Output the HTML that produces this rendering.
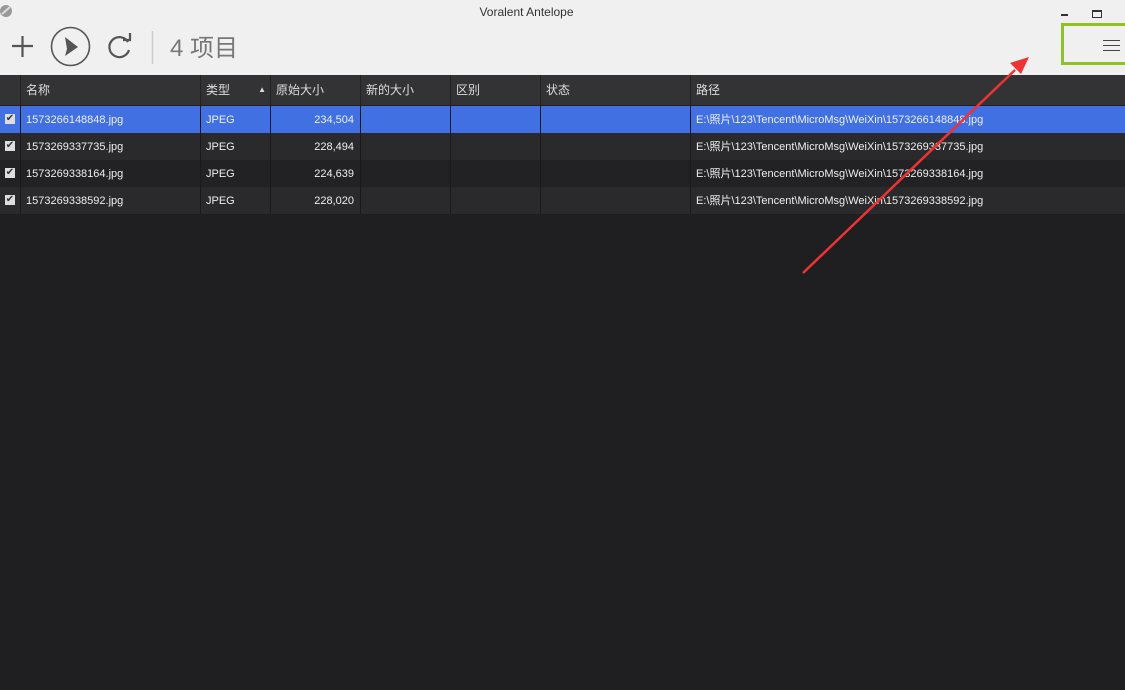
<!DOCTYPE html>
<html><head><meta charset="utf-8"><style>
body{margin:0;width:1125px;height:690px;background:#1f1f21;font-family:"Liberation Sans","Noto Sans CJK SC",sans-serif;position:relative;overflow:hidden}
.top{position:absolute;left:0;top:0;width:1125px;height:75px;background:#f0f0f0}
.title{position:absolute;top:5px;left:0;width:1053px;text-align:center;font-size:12px;color:#333}
.hdr{position:absolute;top:75px;left:0;width:1125px;height:30px;background:#333336;color:#ddd;font-size:12px}
.row{position:absolute;left:0;width:1125px;height:27px;color:#eee;font-size:11px}
.c{position:absolute;top:0;height:100%;line-height:29px;box-sizing:border-box;padding-left:5px;border-left:1px solid #1a1a1a;white-space:nowrap}
.hdr .c{line-height:30px;border-left:1px solid #222}
.chk{position:absolute;left:5px;top:8px;width:10px;height:10px;background:#ddd;font-size:10px;line-height:10px;color:#333;text-align:center}
</style></head><body>
<div class="top">
<svg width="14" height="14" style="position:absolute;left:0;top:4px"><circle cx="6" cy="7" r="6" fill="#999"/><path d="M2 10 L10 3" stroke="#ddd" stroke-width="2"/></svg>
<div class="title">Voralent Antelope</div>
<div style="position:absolute;left:1061px;top:14px;width:7px;height:2px;background:#333"></div>
<div style="position:absolute;left:1092px;top:10px;width:8px;height:5px;border:1px solid #333;border-top-width:2px"></div>
<svg width="160" height="50" style="position:absolute;left:0;top:22px">
<path d="M12 24H33M22.5 14V35" stroke="#555" stroke-width="2.2"/>
<circle cx="70.5" cy="24.5" r="19" fill="none" stroke="#555" stroke-width="1.6"/>
<path d="M65 15L78 25L65 34L67 27Z" fill="#555"/>
<path d="M128 20A10 10 0 1 0 129 28" fill="none" stroke="#555" stroke-width="2.2"/>
<path d="M123 18L130 18L130 11" fill="none" stroke="#555" stroke-width="2.2"/>
<path d="M152.5 9V42" stroke="#ccc" stroke-width="1.5"/>
</svg>
<div style="position:absolute;left:170px;top:28px;font-size:24px;color:#777">4 项目</div>
<div style="position:absolute;left:1061px;top:23px;width:70px;height:42px;border:3px solid #8fc31f;box-sizing:border-box"></div>
<div style="position:absolute;left:1103px;top:40px;width:17px;height:1px;background:#444;box-shadow:0 5px 0 #444,0 10px 0 #444"></div>
</div>
<div class="hdr">
<div class="c" style="left:20px">名称</div><div class="c" style="left:200px;width:70px">类型<span style="position:absolute;right:4px;font-size:8px">▲</span></div><div class="c" style="left:270px">原始大小</div><div class="c" style="left:360px">新的大小</div><div class="c" style="left:450px">区别</div><div class="c" style="left:540px">状态</div><div class="c" style="left:690px">路径</div>
</div>
<div class="row" style="top:106px;background:#4170e3"><div class="chk">✔</div><div class="c" style="left:20px">1573266148848.jpg</div><div class="c" style="left:200px">JPEG</div><div class="c" style="left:270px;width:90px;text-align:right;padding-right:6px">234,504</div><div class="c" style="left:360px"></div><div class="c" style="left:450px"></div><div class="c" style="left:540px"></div><div class="c" style="left:690px">E:\照片\123\Tencent\MicroMsg\WeiXin\1573266148848.jpg</div></div>
<div class="row" style="top:133px;background:#2a2a2c"><div class="chk">✔</div><div class="c" style="left:20px">1573269337735.jpg</div><div class="c" style="left:200px">JPEG</div><div class="c" style="left:270px;width:90px;text-align:right;padding-right:6px">228,494</div><div class="c" style="left:360px"></div><div class="c" style="left:450px"></div><div class="c" style="left:540px"></div><div class="c" style="left:690px">E:\照片\123\Tencent\MicroMsg\WeiXin\1573269337735.jpg</div></div>
<div class="row" style="top:160px;background:#222224"><div class="chk">✔</div><div class="c" style="left:20px">1573269338164.jpg</div><div class="c" style="left:200px">JPEG</div><div class="c" style="left:270px;width:90px;text-align:right;padding-right:6px">224,639</div><div class="c" style="left:360px"></div><div class="c" style="left:450px"></div><div class="c" style="left:540px"></div><div class="c" style="left:690px">E:\照片\123\Tencent\MicroMsg\WeiXin\1573269338164.jpg</div></div>
<div class="row" style="top:187px;background:#2a2a2c"><div class="chk">✔</div><div class="c" style="left:20px">1573269338592.jpg</div><div class="c" style="left:200px">JPEG</div><div class="c" style="left:270px;width:90px;text-align:right;padding-right:6px">228,020</div><div class="c" style="left:360px"></div><div class="c" style="left:450px"></div><div class="c" style="left:540px"></div><div class="c" style="left:690px">E:\照片\123\Tencent\MicroMsg\WeiXin\1573269338592.jpg</div></div>
<svg width="1125" height="690" style="position:absolute;left:0;top:0">
<path d="M803 273L1015 70" stroke="#ee3333" stroke-width="2.5"/>
<path d="M1029 57L1010 63L1021 74Z" fill="#ee3333"/>
</svg>
</body></html>
